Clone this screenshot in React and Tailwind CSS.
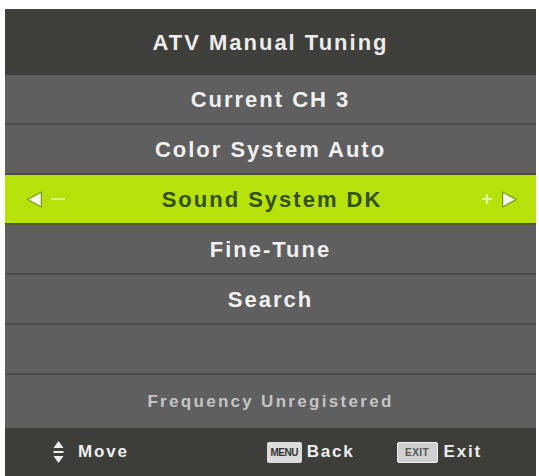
const rows = [
  { label: "Current CH 3" },
  { label: "Color System Auto" },
  { label: "Sound System DK", active: true },
  { label: "Fine-Tune" },
  { label: "Search" },
  { label: "" },
];

const ArrowLeft = () => (
  <svg className="shrink-0" width="17" height="17" viewBox="0 0 16 16">
    <path d="M14.5 1 L1.5 8 L14.5 15 Z" fill="#f4f8e4" stroke="#7a951e" strokeWidth="1.1" strokeLinejoin="round" />
  </svg>
);

const ArrowRight = () => (
  <svg className="shrink-0" width="17" height="17" viewBox="0 0 16 16">
    <path d="M1.5 1 L14.5 8 L1.5 15 Z" fill="#f4f8e4" stroke="#7a951e" strokeWidth="1.1" strokeLinejoin="round" />
  </svg>
);

const Plus = () => (
  <svg className="shrink-0" width="12" height="12" viewBox="0 0 12 12">
    <path d="M6 1 V11 M1 6 H11" stroke="#e4f3a4" strokeWidth="2.2" />
  </svg>
);

const UpDown = () => (
  <svg className="shrink-0" width="11" height="24" viewBox="0 0 11 24">
    <path d="M5.5 1 L10.5 8 L0.5 8 Z" fill="#eeeeee" />
    <rect x="0.5" y="11" width="10" height="2" fill="#eeeeee" />
    <path d="M0.5 16 L10.5 16 L5.5 23 Z" fill="#eeeeee" />
  </svg>
);

export default function App() {
  return (
    <div className="min-h-[476px] w-[539px] bg-white pl-[5px] pt-[9px] [font-family:'Liberation_Sans',Arial,sans-serif]">
      <div className="w-[531px] overflow-hidden bg-[#5f5f5f]">
        <div className="flex h-[66px] items-center justify-center bg-[#3f3f3c] text-[22px] font-bold tracking-[2px] text-[#ececec]">
          ATV Manual Tuning
        </div>

        {rows.map((row, i) =>
          row.active ? (
            <div
              key={i}
              className="flex h-[50px] items-center border-b-2 border-[#4d5a2a] bg-[#b6e20a] pl-[21px] pr-[18px]"
            >
              <div className="flex w-[60px] items-center gap-[8px]">
                <ArrowLeft />
                <span className="h-[2px] w-[14px] bg-[#d8ee8a]" />
              </div>
              <span className="flex-1 text-center text-[22px] font-bold tracking-[2px] text-[#33501a]">
                {row.label}
              </span>
              <div className="flex w-[60px] items-center justify-end gap-[8px]">
                <Plus />
                <ArrowRight />
              </div>
            </div>
          ) : (
            <div
              key={i}
              className="flex h-[50px] items-center justify-center border-b-2 border-[#4c4c4c] bg-[#5f5f5f] text-[22px] font-bold tracking-[2px] text-[#f0f0f0]"
            >
              {row.label}
            </div>
          )
        )}

        <div className="flex h-[53px] items-center justify-center bg-[#5f5f5f] text-[17px] font-bold tracking-[2.3px] text-[#c4c4c4]">
          Frequency Unregistered
        </div>

        <div className="flex h-[48px] items-center bg-[#3d3d3a] pl-[48px] pr-[54px] text-[17px] font-bold tracking-[1.8px] text-[#eeeeee]">
          <UpDown />
          <span className="ml-[14px]">Move</span>
          <div className="ml-auto flex items-center">
            <span className="flex h-[21px] w-[35px] items-center justify-center rounded-[2px] bg-[#dcdcdc] text-[10px] font-bold tracking-[-0.5px] text-[#333333]">
              MENU
            </span>
            <span className="ml-[5px]">Back</span>
            <span className="ml-[42px] flex h-[21px] w-[41px] items-center justify-center rounded-[2px] border border-[#f0f0f0] bg-[#cfcfcf] text-[10px] font-bold tracking-[0.5px] text-[#555555]">
              EXIT
            </span>
            <span className="ml-[6px]">Exit</span>
          </div>
        </div>
      </div>
    </div>
  );
}
